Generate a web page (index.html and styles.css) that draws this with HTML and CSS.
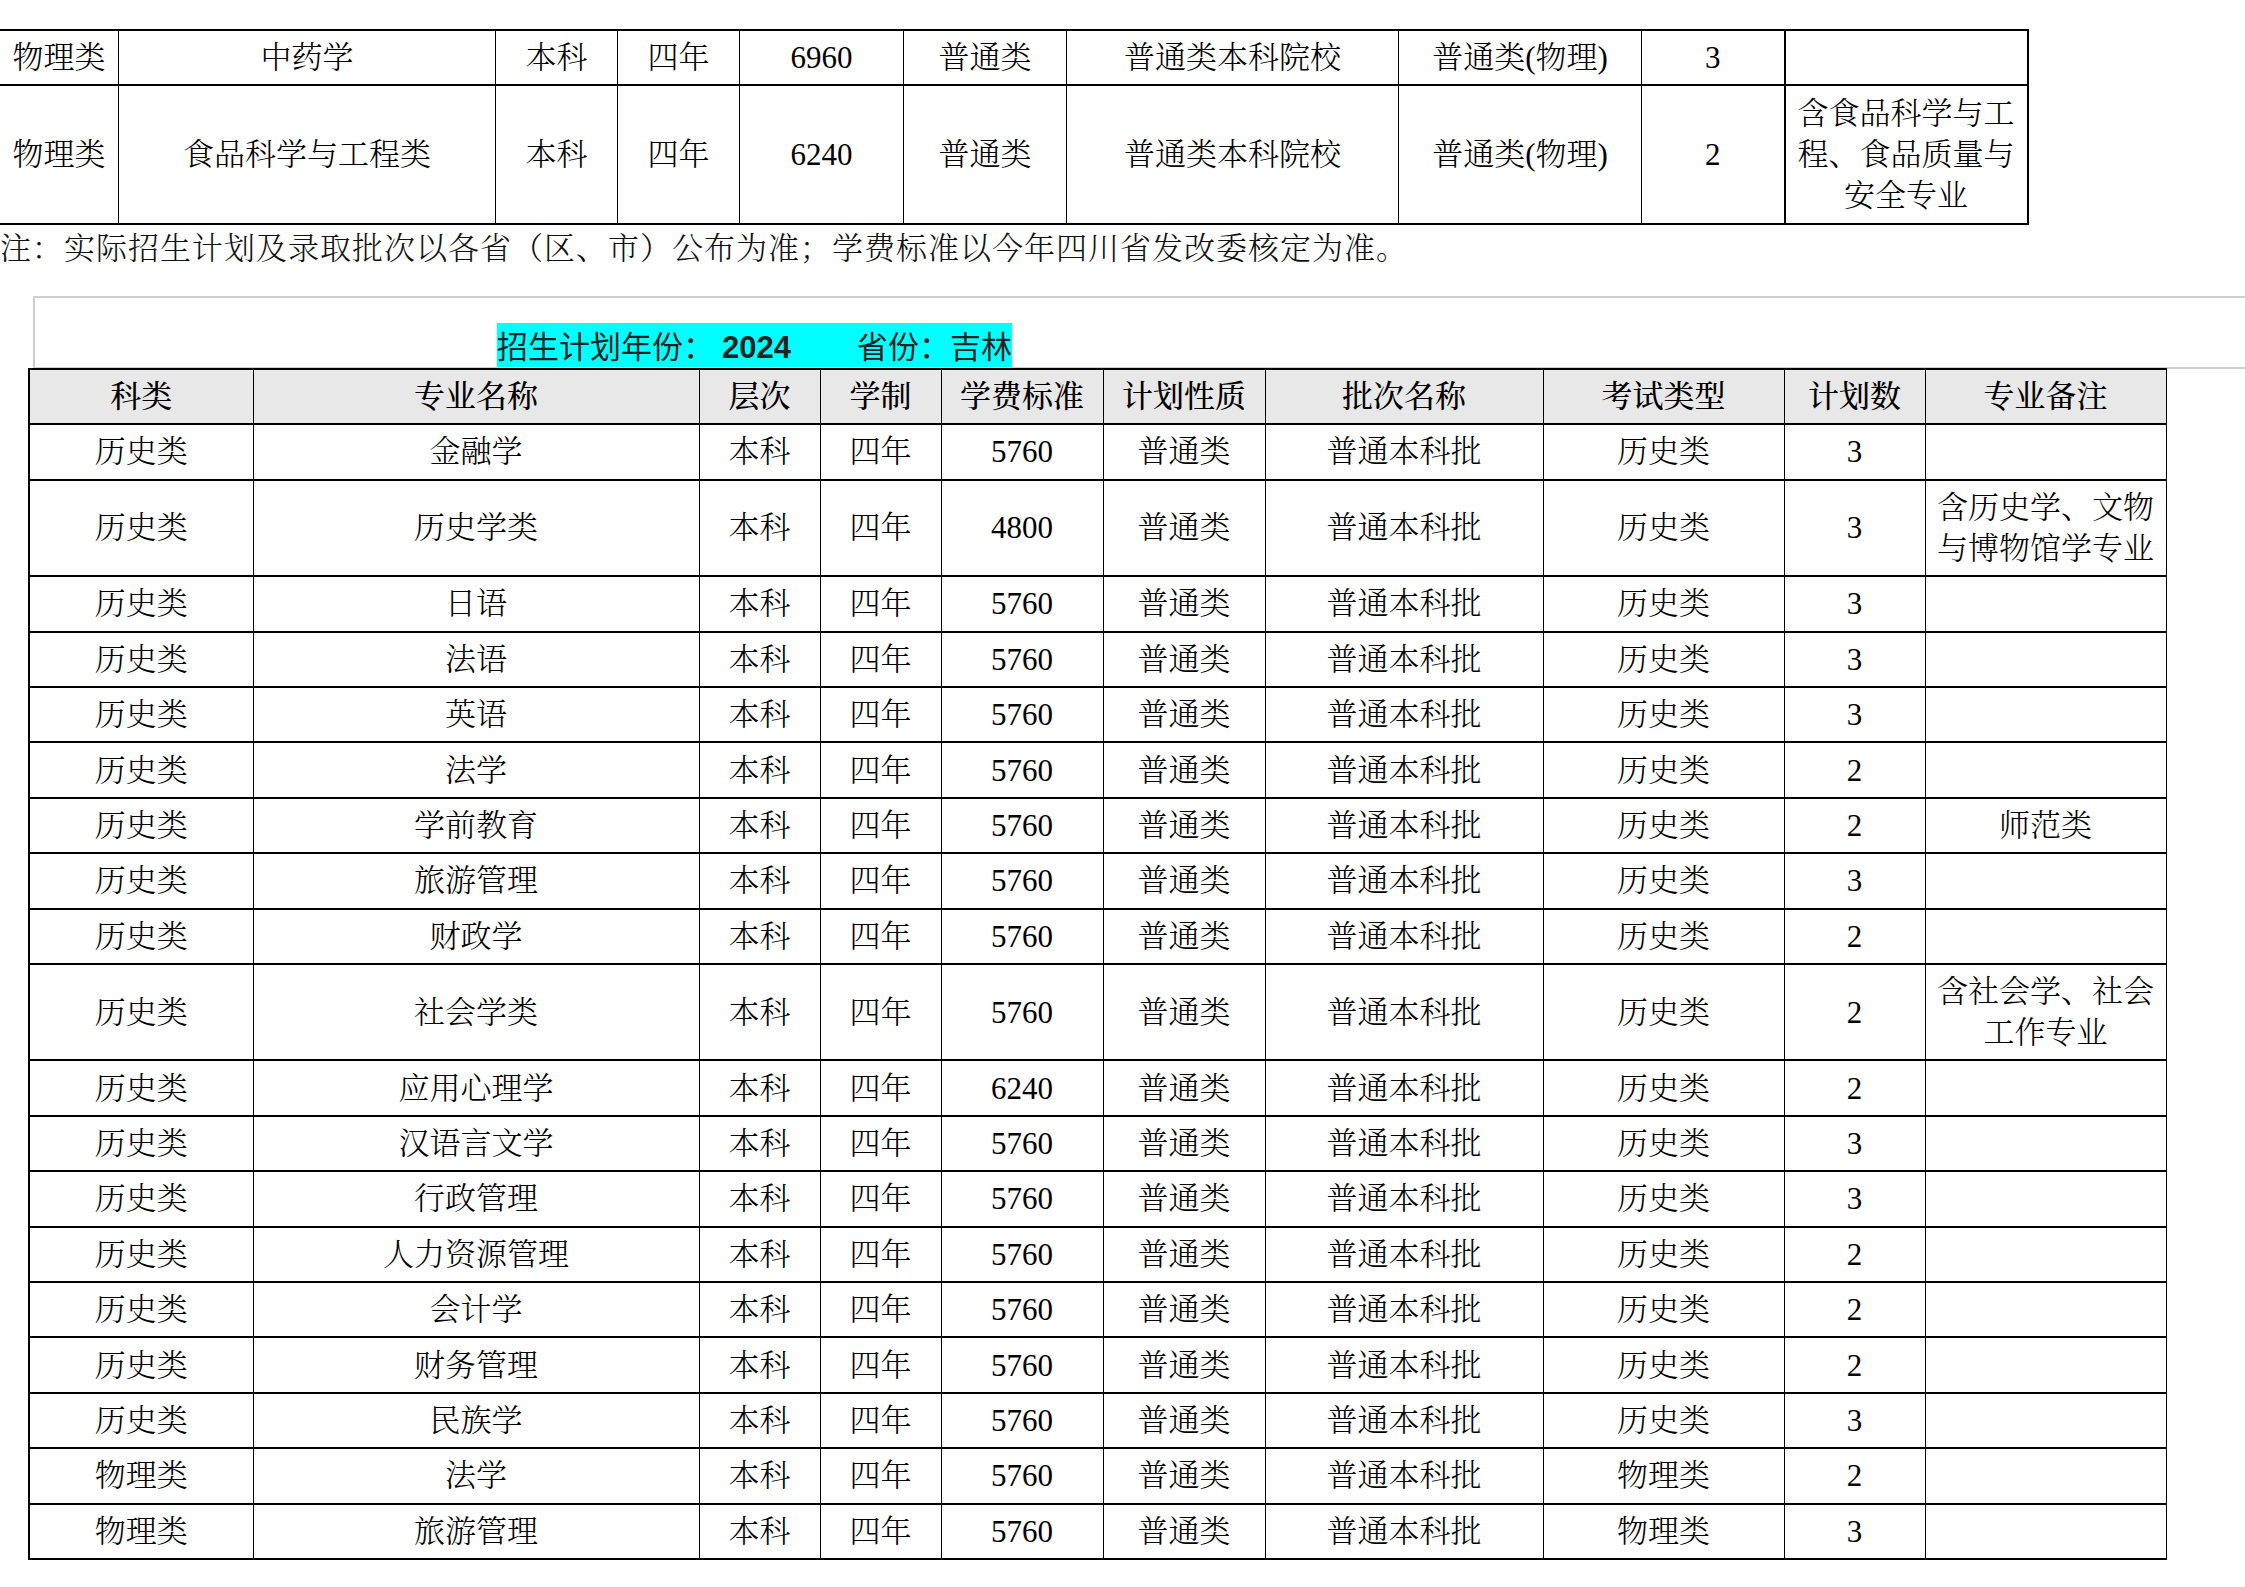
FILE: index.html
```html
<!DOCTYPE html>
<html lang="zh-CN">
<head>
<meta charset="utf-8">
<title>招生计划</title>
<link rel="stylesheet" href="styles.css">
</head>
<body>
<table class="grid top-grid">
  <colgroup>
    <col style="width:119px"><col style="width:377px"><col style="width:122px"><col style="width:122px"><col style="width:164px"><col style="width:163px"><col style="width:332px"><col style="width:243px"><col style="width:143px"><col style="width:243px">
  </colgroup>
  <tr class="r1"><td>物理类</td><td>中药学</td><td>本科</td><td>四年</td><td>6960</td><td>普通类</td><td>普通类本科院校</td><td>普通类(物理)</td><td>3</td><td></td></tr>
  <tr class="r3"><td>物理类</td><td>食品科学与工程类</td><td>本科</td><td>四年</td><td>6240</td><td>普通类</td><td>普通类本科院校</td><td>普通类(物理)</td><td>2</td><td>含食品科学与工<br>程、食品质量与<br>安全专业</td></tr>
</table>
<p class="note">注：实际招生计划及录取批次以各省（区、市）公布为准；学费标准以今年四川省发改委核定为准。</p>
<div class="title-box">
  <span class="title">招生计划年份：<b class="year">2024</b><span class="gap"></span>省份：吉林</span>
</div>
<table class="grid main-grid">
  <colgroup>
    <col style="width:224px"><col style="width:446px"><col style="width:121px"><col style="width:121px"><col style="width:162px"><col style="width:162px"><col style="width:278px"><col style="width:241px"><col style="width:141px"><col style="width:241px">
  </colgroup>
  <tr class="head r1"><th>科类</th><th>专业名称</th><th>层次</th><th>学制</th><th>学费标准</th><th>计划性质</th><th>批次名称</th><th>考试类型</th><th>计划数</th><th>专业备注</th></tr>
  <tr class="r1"><td>历史类</td><td>金融学</td><td>本科</td><td>四年</td><td>5760</td><td>普通类</td><td>普通本科批</td><td>历史类</td><td>3</td><td></td></tr>
  <tr class="r2"><td>历史类</td><td>历史学类</td><td>本科</td><td>四年</td><td>4800</td><td>普通类</td><td>普通本科批</td><td>历史类</td><td>3</td><td>含历史学、文物<br>与博物馆学专业</td></tr>
  <tr class="r1"><td>历史类</td><td>日语</td><td>本科</td><td>四年</td><td>5760</td><td>普通类</td><td>普通本科批</td><td>历史类</td><td>3</td><td></td></tr>
  <tr class="r1"><td>历史类</td><td>法语</td><td>本科</td><td>四年</td><td>5760</td><td>普通类</td><td>普通本科批</td><td>历史类</td><td>3</td><td></td></tr>
  <tr class="r1"><td>历史类</td><td>英语</td><td>本科</td><td>四年</td><td>5760</td><td>普通类</td><td>普通本科批</td><td>历史类</td><td>3</td><td></td></tr>
  <tr class="r1"><td>历史类</td><td>法学</td><td>本科</td><td>四年</td><td>5760</td><td>普通类</td><td>普通本科批</td><td>历史类</td><td>2</td><td></td></tr>
  <tr class="r1"><td>历史类</td><td>学前教育</td><td>本科</td><td>四年</td><td>5760</td><td>普通类</td><td>普通本科批</td><td>历史类</td><td>2</td><td>师范类</td></tr>
  <tr class="r1"><td>历史类</td><td>旅游管理</td><td>本科</td><td>四年</td><td>5760</td><td>普通类</td><td>普通本科批</td><td>历史类</td><td>3</td><td></td></tr>
  <tr class="r1"><td>历史类</td><td>财政学</td><td>本科</td><td>四年</td><td>5760</td><td>普通类</td><td>普通本科批</td><td>历史类</td><td>2</td><td></td></tr>
  <tr class="r2"><td>历史类</td><td>社会学类</td><td>本科</td><td>四年</td><td>5760</td><td>普通类</td><td>普通本科批</td><td>历史类</td><td>2</td><td>含社会学、社会<br>工作专业</td></tr>
  <tr class="r1"><td>历史类</td><td>应用心理学</td><td>本科</td><td>四年</td><td>6240</td><td>普通类</td><td>普通本科批</td><td>历史类</td><td>2</td><td></td></tr>
  <tr class="r1"><td>历史类</td><td>汉语言文学</td><td>本科</td><td>四年</td><td>5760</td><td>普通类</td><td>普通本科批</td><td>历史类</td><td>3</td><td></td></tr>
  <tr class="r1"><td>历史类</td><td>行政管理</td><td>本科</td><td>四年</td><td>5760</td><td>普通类</td><td>普通本科批</td><td>历史类</td><td>3</td><td></td></tr>
  <tr class="r1"><td>历史类</td><td>人力资源管理</td><td>本科</td><td>四年</td><td>5760</td><td>普通类</td><td>普通本科批</td><td>历史类</td><td>2</td><td></td></tr>
  <tr class="r1"><td>历史类</td><td>会计学</td><td>本科</td><td>四年</td><td>5760</td><td>普通类</td><td>普通本科批</td><td>历史类</td><td>2</td><td></td></tr>
  <tr class="r1"><td>历史类</td><td>财务管理</td><td>本科</td><td>四年</td><td>5760</td><td>普通类</td><td>普通本科批</td><td>历史类</td><td>2</td><td></td></tr>
  <tr class="r1"><td>历史类</td><td>民族学</td><td>本科</td><td>四年</td><td>5760</td><td>普通类</td><td>普通本科批</td><td>历史类</td><td>3</td><td></td></tr>
  <tr class="r1"><td>物理类</td><td>法学</td><td>本科</td><td>四年</td><td>5760</td><td>普通类</td><td>普通本科批</td><td>物理类</td><td>2</td><td></td></tr>
  <tr class="r1"><td>物理类</td><td>旅游管理</td><td>本科</td><td>四年</td><td>5760</td><td>普通类</td><td>普通本科批</td><td>物理类</td><td>3</td><td></td></tr>
</table>
</body>
</html>
```

FILE: styles.css
```css
html, body {
  margin: 0;
  padding: 0;
  background: #ffffff;
}

body {
  font-family: "Liberation Serif", "Noto Serif CJK SC", "Noto Sans CJK SC", serif;
  font-size: 31px;
  color: #000000;
  font-weight: 300;
}

.grid {
  border-collapse: collapse;
  table-layout: fixed;
}

.grid td,
.grid th {
  border-left: 1px solid #000;
  border-right: 1px solid #000;
  border-top: 2px solid #000;
  border-bottom: 2px solid #000;
  text-align: center;
  vertical-align: middle;
  padding: 0 6px;
  line-height: 41px;
  white-space: nowrap;
  overflow: hidden;
}

.top-grid {
  width: 2028px;
  margin: 29px 0 0 -1px;
}

.top-grid tr > *:last-child,
.main-grid tr > *:first-child {
  border-left-width: 2px;
}

.top-grid tr > *:last-child {
  border-right-width: 2px;
}

.r1 { height: 55.4px; }
.r2 { height: 96.5px; }
.r3 { height: 138.5px; }

.note {
  margin: 2px 0 25px 0;
  line-height: 44px;
  white-space: nowrap;
  letter-spacing: 1px;
  color: #111;
}

.title-box {
  margin-left: 33px;
  height: 44px;
  padding: 25px 0 0 462px;
  border-top: 2px solid #cfcfcf;
  border-left: 2px solid #cfcfcf;
  border-bottom: 2px solid #cfcfcf;
}

.title {
  display: inline-block;
  height: 44px;
  line-height: 44px;
  background: #00ffff;
  color: #222222;
  font-family: "Noto Sans CJK SC", sans-serif;
  font-weight: 400;
  font-size: 31px;
  white-space: nowrap;
  vertical-align: top;
}

.year {
  font-family: "Liberation Sans", "Noto Sans CJK SC", sans-serif;
  font-weight: 700;
  margin-left: 8px;
}

.gap {
  display: inline-block;
  width: 66px;
}

.main-grid {
  width: 2138px;
  margin: -1px 0 0 28px;
}

.head th {
  background: #e8e8e8;
  font-weight: 500;
}
```
